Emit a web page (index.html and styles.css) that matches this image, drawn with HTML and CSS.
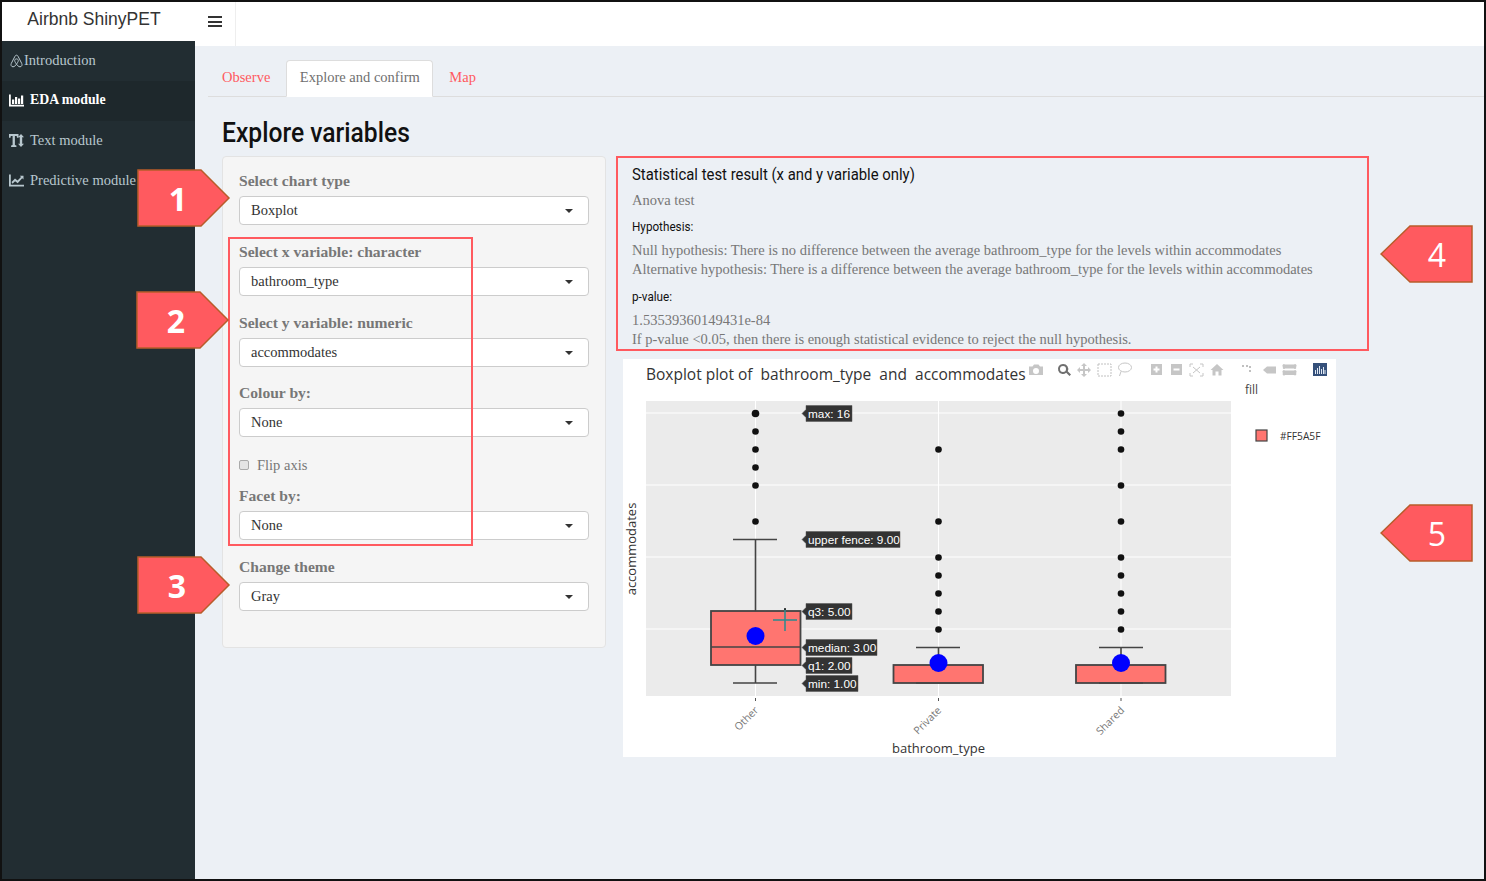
FILE: index.html
```html
<!DOCTYPE html>
<html lang="en">

<head>
    <meta charset="UTF-8">
    <meta name="viewport" content="width=device-width, initial-scale=1.0">
    <title>Airbnb ShinyPET</title>
    <link rel="stylesheet" href="styles.css">
</head>

<body>
    <div class="frame">
        <aside class="sidebar">
            <div class="brand">Airbnb ShinyPET</div>
            <ul class="side-menu">
                <li class="side-item side-item-intro">
                    <svg class="side-icon side-icon-small" viewBox="0 0 14 14"><path d="M7 1.200C6 1.200 5.600 2 5.100 3L1.800 9.400C1 11 1.800 12.800 3.500 12.800C4.900 12.800 6 11.600 7 10.200C8 11.600 9.100 12.800 10.500 12.800C12.200 12.800 13 11 12.200 9.400L8.900 3C8.400 2 8 1.200 7 1.200ZM7 10.200C6 8.800 5.200 7.600 5.200 6.500C5.200 5.500 6 4.900 7 4.900C8 4.900 8.800 5.500 8.800 6.500C8.800 7.600 8 8.800 7 10.200Z" /></svg>
                    Introduction
                </li>
                <li class="side-item side-item-active">
                    <svg class="side-icon" viewBox="0 0 15 12"><path class="icon-fill" d="M0 0H1.800V10.200H15V12H0ZM3 5H5.200V9.500H3ZM6 2.500H8.200V9.500H6ZM9 4H11.200V9.500H9ZM12 1H14.200V9.500H12Z" /></svg>
                    EDA module
                </li>
                <li class="side-item">
                    <svg class="side-icon" viewBox="0 0 15 13"><path class="icon-fill" d="M0 0H9.500V3.800H8L7.700 2H5.900V11L7.400 11.400V13H2.100V11.400L3.600 11V2H1.800L1.500 3.800H0ZM12 0L15 3.200H13.200V9.800H15L12 13L9 9.800H10.800V3.200H9Z" /></svg>
                    Text module
                </li>
                <li class="side-item">
                    <svg class="side-icon" viewBox="0 0 15 12"><path class="icon-fill" d="M0 0H1.800V10.200H15V12H0ZM2.500 7.500L6 4L8.500 6L12 2.500L10.800 1.300H14.500V5L13.200 3.700L8.700 8.800L6.100 6.700L3.500 9.300Z" /></svg>
                    Predictive module
                </li>
            </ul>
        </aside>

        <div class="main">
            <header class="navbar">
                <div class="toggle">
                    <span class="toggle-bar"></span>
                    <span class="toggle-bar"></span>
                    <span class="toggle-bar"></span>
                </div>
            </header>

            <div class="content">
                <ul class="tabs">
                    <li class="tab">Observe</li>
                    <li class="tab tab-active">Explore and confirm</li>
                    <li class="tab">Map</li>
                </ul>

                <h2 class="page-title">Explore variables</h2>

                <div class="columns">
                    <form class="panel">
                        <div class="field">
                            <label class="field-label">Select chart type</label>
                            <div class="select">Boxplot</div>
                        </div>
                        <div class="field">
                            <label class="field-label">Select x variable: character</label>
                            <div class="select">bathroom_type</div>
                        </div>
                        <div class="field">
                            <label class="field-label">Select y variable: numeric</label>
                            <div class="select">accommodates</div>
                        </div>
                        <div class="field">
                            <label class="field-label">Colour by:</label>
                            <div class="select">None</div>
                        </div>
                        <div class="check-row">
                            <span class="check-box"></span>
                            <span>Flip axis</span>
                        </div>
                        <div class="field">
                            <label class="field-label">Facet by:</label>
                            <div class="select">None</div>
                        </div>
                        <div class="field">
                            <label class="field-label">Change theme</label>
                            <div class="select">Gray</div>
                        </div>
                    </form>

                    <div class="results">
                        <section class="stats">
                            <h4 class="stats-title">Statistical test result (x and y variable only)</h4>
                            <p class="stats-test">Anova test</p>
                            <h5 class="stats-head">Hypothesis:</h5>
                            <p class="stats-text">Null hypothesis: There is no difference between the average bathroom_type for the levels within accommodates<br>Alternative hypothesis: There is a difference between the average bathroom_type for the levels within accommodates</p>
                            <h5 class="stats-head">p-value:</h5>
                            <p class="stats-text stats-text-tight">1.53539360149431e-84<br>If p-value &lt;0.05, then there is enough statistical evidence to reject the null hypothesis.</p>
                        </section>

                        <div class="plot">
                            <svg class="plot-svg" viewBox="623 359 713 398">
                                <text class="plot-title" x="646" y="379.500">Boxplot plot of  bathroom_type  and  accommodates</text>

                                <!-- modebar -->
                                <g class="modebar">
                                    <path fill-rule="evenodd" d="M1029 366.500H1032.500L1034 364.500H1038.500L1040 366.500H1043V375H1029ZM1036 368A3 3 0 1 0 1036 374A3 3 0 1 0 1036 368Z" />
                                    <path class="mode-on" fill-rule="evenodd" d="M1063 364A5 5 0 1 0 1066.200 372.800L1069.500 376L1071 374.500L1067.700 371.300A5 5 0 0 0 1063 364ZM1063 366A3 3 0 1 1 1063 372A3 3 0 1 1 1063 366Z" />
                                    <path d="M1084 363L1087 366H1085V369H1088V367L1091 370L1088 373V371H1085V374H1087L1084 377L1081 374H1083V371H1080V373L1077 370L1080 367V369H1083V366H1081Z" />
                                    <rect class="mode-box" x="1098" y="364" width="13" height="12" />
                                    <ellipse class="mode-line" cx="1125" cy="367.500" rx="6.500" ry="4.500" />
                                    <path class="mode-line" d="M1121 371.500L1119.500 376" />
                                    <path fill-rule="evenodd" d="M1151 364H1162V375H1151ZM1155.500 366.500V368.500H1153.500V370.500H1155.500V372.500H1157.500V370.500H1159.500V368.500H1157.500V366.500Z" />
                                    <path fill-rule="evenodd" d="M1171 364H1182V375H1171ZM1173.500 368.500V370.500H1179.500V368.500Z" />
                                    <path class="mode-line" d="M1190 367V364H1193M1200 364H1203V367M1203 373V376H1200M1193 376H1190V373M1193 367L1200 373M1200 367L1193 373" />
                                    <path d="M1217 364L1223.500 370H1221.500V375.500H1218.500V371.500H1215.500V375.500H1212.500V370H1210.500Z" />
                                    <path class="mode-dash" d="M1242 366H1250M1250 366V374" />
                                    <path d="M1263 370L1267 366.500H1276V373.500H1267Z" />
                                    <path d="M1285 364.500H1294A1 1 0 0 1 1296 367A1 1 0 0 1 1294 368.500H1285A1 1 0 0 1 1283 367A1 1 0 0 1 1285 364.500ZM1285 370.500H1294A1 1 0 0 1 1296 373A1 1 0 0 1 1294 375H1285A1 1 0 0 1 1283 373A1 1 0 0 1 1285 370.500Z" />
                                    <rect class="mode-logo" x="1313" y="363" width="14" height="13" />
                                    <path class="mode-logo-bars" d="M1315.500 370V374M1317.500 368V374M1319.500 366V374M1321.500 369V374M1323.500 367V374M1325 370V374" />
                                </g>

                                <!-- panel and grid -->
                                <rect class="plot-bg" x="646" y="401" width="585" height="295" />
                                <path class="grid" d="M646 413H1231M646 485H1231M646 557H1231M646 629H1231M755.500 401V696M938.500 401V696M1121 401V696" />

                                <!-- outliers -->
                                <g class="dots">
                                    <circle cx="755.500" cy="413.500" r="3.800" />
                                    <circle cx="755.500" cy="431.500" r="3.300" />
                                    <circle cx="755.500" cy="449.500" r="3.300" />
                                    <circle cx="755.500" cy="467.500" r="3.300" />
                                    <circle cx="755.500" cy="485.500" r="3.300" />
                                    <circle cx="755.500" cy="521.500" r="3.300" />
                                    <circle cx="938.500" cy="449.500" r="3.300" />
                                    <circle cx="938.500" cy="521.500" r="3.300" />
                                    <circle cx="938.500" cy="557.500" r="3.300" />
                                    <circle cx="938.500" cy="575.500" r="3.300" />
                                    <circle cx="938.500" cy="593.500" r="3.300" />
                                    <circle cx="938.500" cy="611.500" r="3.300" />
                                    <circle cx="938.500" cy="629.500" r="3.300" />
                                    <circle cx="1121" cy="413.500" r="3.300" />
                                    <circle cx="1121" cy="431.500" r="3.300" />
                                    <circle cx="1121" cy="449.500" r="3.300" />
                                    <circle cx="1121" cy="485.500" r="3.300" />
                                    <circle cx="1121" cy="521.500" r="3.300" />
                                    <circle cx="1121" cy="557.500" r="3.300" />
                                    <circle cx="1121" cy="575.500" r="3.300" />
                                    <circle cx="1121" cy="593.500" r="3.300" />
                                    <circle cx="1121" cy="611.500" r="3.300" />
                                    <circle cx="1121" cy="629.500" r="3.300" />
                                </g>

                                <!-- boxes -->
                                <g class="boxes">
                                    <path class="whisker" d="M733 539.500H777M755.500 539.500V611M755.500 665V683M733 683H777" />
                                    <rect x="711" y="611" width="89.500" height="54" />
                                    <path class="whisker" d="M711 647H800.500" />
                                    <path class="whisker" d="M916 647.500H960M938.500 647.500V665" />
                                    <rect x="893.500" y="665" width="89.500" height="18" />
                                    <path class="whisker" d="M916 683H960" />
                                    <path class="whisker" d="M1099 647.500H1143M1121 647.500V665" />
                                    <rect x="1076" y="665" width="89.500" height="18" />
                                    <path class="whisker" d="M1099 683H1143" />
                                </g>
                                <circle class="mean" cx="755.500" cy="636" r="9" />
                                <circle class="mean" cx="938.500" cy="663" r="9" />
                                <circle class="mean" cx="1121" cy="663" r="9" />

                                <!-- cursor -->
                                <path class="cursor" d="M773 620H797M785 609V631" />
                                <path class="cursor-tip" d="M785 608V610" />

                                <!-- hover labels -->
                                <g class="hover">
                                    <path d="M802 413.500L806 409.500V405.500H852V421.500H806V417.500Z" />
                                    <text x="808" y="418">max: 16</text>
                                    <path d="M802 539.500L806 535.500V531.500H900V547.500H806V543.500Z" />
                                    <text x="808" y="544">upper fence: 9.00</text>
                                    <path d="M802 611.500L806 607.500V603.500H852V619.500H806V615.500Z" />
                                    <text x="808" y="616">q3: 5.00</text>
                                    <path d="M802 647.500L806 643.500V639.500H877V655.500H806V651.500Z" />
                                    <text x="808" y="652">median: 3.00</text>
                                    <path d="M802 665.500L806 661.500V657.500H852V673.500H806V669.500Z" />
                                    <text x="808" y="670">q1: 2.00</text>
                                    <path d="M802 683.500L806 679.500V675.500H858V691.500H806V687.500Z" />
                                    <text x="808" y="688">min: 1.00</text>
                                </g>

                                <!-- axes -->
                                <path class="tick" d="M755.500 698V701M938.500 698V701M1121 698V701" />
                                <text class="tick-label" transform="translate(759 711) rotate(-45)">Other</text>
                                <text class="tick-label" transform="translate(942 711) rotate(-45)">Private</text>
                                <text class="tick-label" transform="translate(1125 711) rotate(-45)">Shared</text>
                                <text class="axis-title" x="938.500" y="752.500">bathroom_type</text>
                                <text class="axis-title" transform="translate(636 549) rotate(-90)">accommodates</text>

                                <!-- legend -->
                                <text class="legend-title" x="1245" y="394">fill</text>
                                <rect class="legend-key" x="1256" y="430" width="11" height="11" />
                                <text class="legend-label" x="1280" y="439.500">#FF5A5F</text>
                            </svg>
                        </div>
                    </div>
                </div>
            </div>
        </div>

        <!-- annotations put on top of the screenshot -->
        <div class="group-box"></div>
        <svg class="callout callout-1" viewBox="0 0 94 58"><polygon points="1,1 64,1 92,29 64,57 1,57" /><text x="41" y="42">1</text></svg>
        <svg class="callout callout-2" viewBox="0 0 94 58"><polygon points="1,1 64,1 92,29 64,57 1,57" /><text x="40" y="42">2</text></svg>
        <svg class="callout callout-3" viewBox="0 0 94 58"><polygon points="1,1 64,1 92,29 64,57 1,57" /><text x="40" y="42">3</text></svg>
        <svg class="callout callout-4" viewBox="0 0 94 58"><polygon points="92,1 30,1 1,29 30,57 92,57" /><text class="callout-thin" x="57" y="42">4</text></svg>
        <svg class="callout callout-5" viewBox="0 0 94 58"><polygon points="92,1 30,1 1,29 30,57 92,57" /><text class="callout-thin" x="57" y="42">5</text></svg>
    </div>
</body>

</html>
```

FILE: styles.css
```css
* {
    box-sizing: border-box;
}

body {
    margin: 0;
    font-family: "Liberation Serif", serif;
    font-size: 14.5px;
    color: #333;
    background: #ecf0f5;
}

.frame {
    position: relative;
    display: flex;
    height: 881px;
    border: 2px solid #111;
    overflow: hidden;
}

/* sidebar */
.sidebar {
    flex: 0 0 193px;
    background-color: #222d32;
}

.brand {
    height: 39px;
    padding: 6px 9px 0 0;
    background: #fff;
    color: #333;
    font-family: "Liberation Sans", sans-serif;
    font-size: 17.500px;
    line-height: 22px;
    text-align: center;
}

.side-menu {
    margin: 0;
    padding: 0;
    list-style: none;
}

.side-item {
    display: flex;
    align-items: center;
    gap: 6px;
    height: 40px;
    padding: 0 0 2px 7px;
    color: #b8c7ce;
    white-space: nowrap;
}

.side-item-intro {
    gap: 0;
    padding-bottom: 1px;
}

.side-item-active {
    background-color: #1e282c;
    color: #fff;
    font-weight: 700;
    font-size: 13.800px;
}

.side-icon {
    width: 15px;
    height: 13px;
    flex: none;
}

.side-icon-small {
    height: 14px;
    fill: none;
    stroke: #b8c7ce;
    stroke-width: 1;
}

.icon-fill {
    fill: currentColor;
}

/* top bar */
.main {
    flex: 1;
    min-width: 0;
}

.navbar {
    height: 44px;
    background: #fff;
}

.toggle {
    display: flex;
    flex-direction: column;
    justify-content: center;
    gap: 2.500px;
    width: 41px;
    height: 44px;
    padding: 0 13px 5px;
    border-right: 1px solid #eee;
}

.toggle-bar {
    height: 2px;
    background: #333;
}

/* tabs */
.content {
    padding: 14px 0 0 13px;
}

.tabs {
    display: flex;
    gap: 2px;
    height: 37px;
    margin: 0;
    padding: 0;
    list-style: none;
    border-bottom: 1px solid #ddd;
}

.tab {
    height: 37px;
    padding: 7px 14px;
    line-height: 20px;
    color: #ff5a5f;
    border-radius: 4px 4px 0 0;
}

.tab-active {
    color: #6f6f6f;
    background: #fff;
    border: 1px solid #ddd;
    border-bottom-color: #fff;
    padding: 6px 12.500px;
}

.page-title {
    margin: 20px 0 7px 14px;
    font-family: Roboto, sans-serif;
    font-size: 28px;
    font-weight: 500;
    line-height: 32px;
    color: #111;
    transform: scaleX(0.88);
    transform-origin: left;
}

.columns {
    display: grid;
    grid-template-columns: 384px 753px;
    gap: 10px;
    margin-left: 14px;
    align-items: start;
}

/* inputs */
.panel {
    height: 492px;
    padding: 14.300px 16px 0;
    background: #f5f5f5;
    border: 1px solid #e3e3e3;
    border-radius: 4px;
}

.field {
    margin-bottom: 16.700px;
}

.field-label {
    display: block;
    height: 20px;
    margin-bottom: 5px;
    line-height: 20px;
    font-weight: 700;
    color: #777;
    font-size: 15.600px;
}

.select {
    position: relative;
    height: 29px;
    padding-left: 11px;
    line-height: 26px;
    color: #333;
    background: #fff;
    border: 1px solid #ccc;
    border-radius: 4px;
}

.select::after {
    content: "";
    position: absolute;
    top: 12px;
    right: 15px;
    border-top: 4px solid #333;
    border-left: 4px solid transparent;
    border-right: 4px solid transparent;
}

.check-row {
    display: flex;
    align-items: center;
    gap: 8px;
    height: 22px;
    margin-bottom: 10px;
    color: #777;
}

.check-box {
    width: 10px;
    height: 10px;
    background: #e4e4e4;
    border: 1px solid #aaa;
    border-radius: 2px;
}

/* statistics */
.stats {
    height: 195px;
    padding: 7px 14px 0;
    border: 2px solid #ff5a5f;
    color: #777;
}

.stats-title {
    margin: 0 0 6px;
    font-family: Roboto, sans-serif;
    font-size: 16px;
    font-weight: 400;
    line-height: 20px;
    color: #111;
    transform: scaleX(0.93);
    transform-origin: left;
}

.stats-test {
    margin: 0 0 8px;
    line-height: 19px;
}

.stats-head {
    margin: 0 0 5px;
    font-family: Roboto, sans-serif;
    font-size: 13px;
    font-weight: 400;
    line-height: 18px;
    color: #111;
    transform: scaleX(0.9);
    transform-origin: left;
}

.stats-text {
    margin: 0 0 9px;
    line-height: 19px;
}

.stats-text-tight {
    line-height: 18.500px;
}

/* plot */
.plot {
    width: 713px;
    height: 398px;
    margin: 8px 0 0 7px;
    background: #fff;
}

.plot-svg {
    display: block;
    width: 713px;
    height: 398px;
}

.plot-title {
    font-family: "Open Sans", sans-serif;
    font-size: 15.500px;
    white-space: pre;
    fill: #333;
}

.modebar path,
.modebar rect {
    fill: #c6c6c6;
}

.modebar .mode-on {
    fill: #6f6f6f;
}

.modebar .mode-line,
.modebar ellipse {
    fill: none;
    stroke: #c6c6c6;
    stroke-width: 1;
}

.modebar .mode-box {
    fill: none;
    stroke: #c0c0c0;
    stroke-width: 1;
    stroke-dasharray: 2 1;
}

.modebar .mode-dash {
    fill: none;
    stroke: #c0c0c0;
    stroke-width: 2;
    stroke-dasharray: 2 2;
}

.modebar .mode-logo {
    fill: #35507a;
}

.modebar .mode-logo-bars {
    fill: none;
    stroke: #dfe7f2;
    stroke-width: 1;
}

.plot-bg {
    fill: #ebebeb;
}

.grid {
    stroke: #fff;
    stroke-width: 1;
    fill: none;
}

.dots circle {
    fill: #111;
}

.boxes rect {
    fill: #ff7570;
    stroke: #444;
    stroke-width: 1.800;
}

.whisker {
    fill: none;
    stroke: #444;
    stroke-width: 1.600;
}

.mean {
    fill: #0000ff;
}

.cursor {
    fill: none;
    stroke: #2a8b8f;
    stroke-width: 1.500;
}

.cursor-tip {
    stroke: #111;
    stroke-width: 1.500;
}

.hover path {
    fill: #333;
    stroke: #555;
    stroke-width: 0.500;
}

.hover text {
    font-family: "Liberation Sans", sans-serif;
    font-size: 11.800px;
    fill: #fff;
}

.tick {
    stroke: #555;
    stroke-width: 1;
}

.tick-label {
    font-family: "Open Sans", sans-serif;
    font-size: 10.500px;
    fill: #777;
    text-anchor: end;
}

.axis-title {
    font-family: "Open Sans", sans-serif;
    font-size: 13px;
    fill: #333;
    text-anchor: middle;
}

.legend-title {
    font-family: "Open Sans", sans-serif;
    font-size: 12px;
    fill: #444;
}

.legend-key {
    fill: #ff7570;
    stroke: #444;
    stroke-width: 1.200;
}

.legend-label {
    font-family: "Open Sans", sans-serif;
    font-size: 10.200px;
    fill: #333;
}

/* annotations */
.group-box {
    position: absolute;
    left: 226px;
    top: 235px;
    width: 245px;
    height: 309px;
    border: 2px solid #ff5a5f;
}

.callout {
    position: absolute;
    width: 94px;
    height: 58px;
}

.callout polygon {
    fill: #ff5a5f;
    stroke: #b85c2a;
    stroke-width: 1.500;
}

.callout text {
    font-family: "Open Sans", sans-serif;
    font-size: 32px;
    font-weight: 700;
    fill: #fff;
    text-anchor: middle;
}

.callout .callout-thin {
    font-weight: 400;
}

.callout-1 {
    left: 135px;
    top: 167px;
}

.callout-2 {
    left: 134px;
    top: 289px;
}

.callout-3 {
    left: 135px;
    top: 554px;
}

.callout-4 {
    left: 1378px;
    top: 223px;
}

.callout-5 {
    left: 1378px;
    top: 502px;
}
```
